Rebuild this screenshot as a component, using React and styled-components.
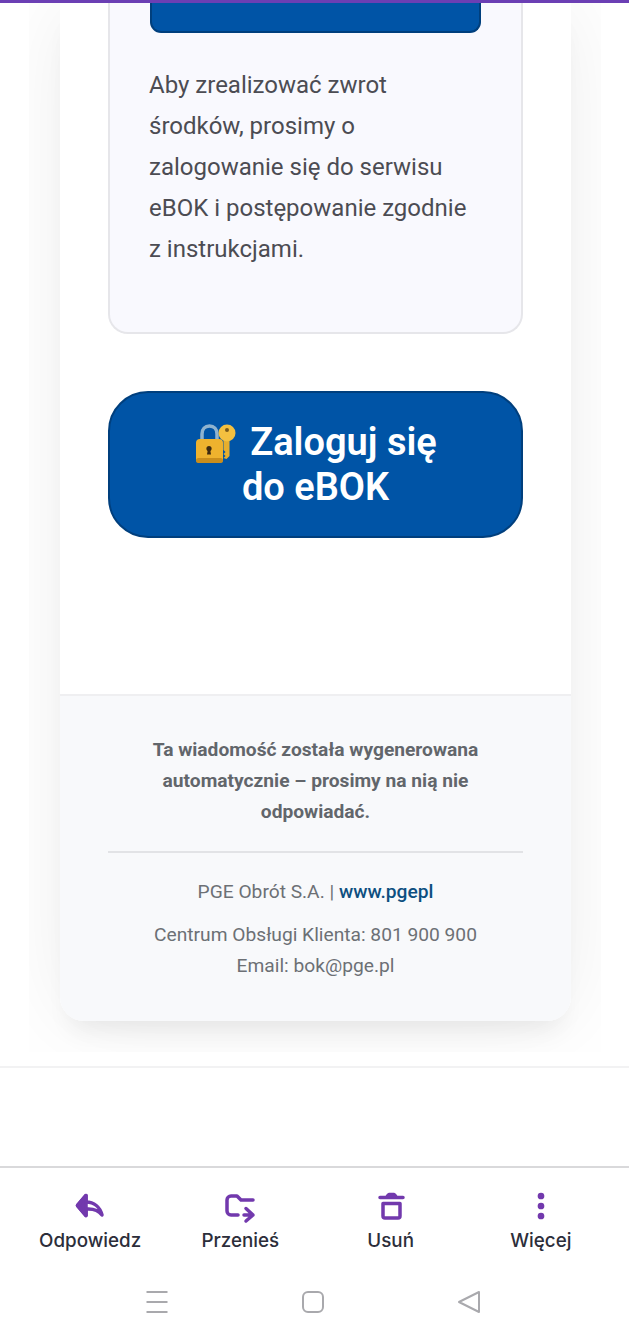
import React from "react";
import styled, { createGlobalStyle } from "styled-components";

const GlobalStyle = createGlobalStyle`
  html, body {
    margin: 0;
    padding: 0;
    height: 1341px;
    overflow: hidden;
    background: #fff;
  }
  * {
    box-sizing: border-box;
  }
`;

const Page = styled.div`
  width: 629px;
  height: 1341px;
  display: flex;
  flex-direction: column;
  background: #fff;
  font-family: Roboto, "Liberation Sans", sans-serif;
`;

const ProgressBar = styled.div`
  height: 3px;
  background: #6b3fb4;
  flex: none;
`;

const MailBody = styled.div`
  height: 1049px;
  flex: none;
  margin: 0 28px 0 29px;
  padding: 0 30px 31px 31px;
  overflow: hidden;
`;

const Card = styled.div`
  background: #fff;
  border-radius: 0 0 24px 24px;
  box-shadow: 0 0 90px rgba(0, 0, 0, 0.07), 0 18px 24px -10px rgba(0, 0, 0, 0.07);
`;

const Main = styled.div`
  padding: 0 48px 156px;
`;

const Panel = styled.div`
  background: #f9f9fe;
  border: 2px solid #e6e6ea;
  border-top: none;
  border-radius: 0 0 20px 20px;
  padding: 0 40px 62px;
`;

const PanelButton = styled.div`
  height: 30px;
  background: #0054a6;
  border: 2px solid #003f7d;
  border-top: none;
  border-radius: 0 0 11px 11px;
`;

const PanelText = styled.p`
  margin: 32px 0 0 -1px;
  font-size: 24px;
  line-height: 41px;
  color: #4c4c53;
  white-space: nowrap;
`;

const LoginButton = styled.a`
  display: block;
  margin-top: 57px;
  padding: 26.5px 20px;
  background: #0054a6;
  border: 2px solid #003f7d;
  border-radius: 40px;
  color: #fff;
  font-size: 38px;
  font-weight: 600;
  line-height: 45px;
  text-align: center;
`;

const LockIcon = styled.svg`
  width: 44px;
  height: 42px;
  margin-right: 12px;
  vertical-align: -9px;
`;

const Footer = styled.div`
  background: #f8f9fb;
  border-top: 2px solid #efeff1;
  border-radius: 0 0 24px 24px;
  padding: 38px 48px 40px;
  text-align: center;
  color: #6c7075;
`;

const Notice = styled.p`
  margin: 0;
  font-size: 19.2px;
  font-weight: 700;
  line-height: 31px;
  color: #62666b;
  white-space: nowrap;
`;

const Divider = styled.hr`
  margin: 24px 0 23px;
  border: none;
  border-top: 2px solid #e2e3e6;
`;

const FooterLine = styled.p`
  margin: ${(p) => (p.$spaced ? "12px 0 0" : "0")};
  font-size: 19.2px;
  line-height: 31px;
  white-space: nowrap;
`;

const SiteLink = styled.a`
  color: #0d4f80;
  font-weight: 500;
`;

const Spacer = styled.div`
  height: 100px;
  flex: none;
  margin-top: 14px;
  border-top: 2px solid #f2f2f3;
`;

const ActionBar = styled.div`
  flex: none;
  height: 107px;
  border-top: 2px solid #d9d9db;
  padding: 0 13px 0 15px;
  display: grid;
  grid-template-columns: repeat(4, 1fr);
`;

const Action = styled.button`
  background: none;
  border: none;
  padding: 21px 0 0;
  display: flex;
  flex-direction: column;
  align-items: center;
  font-family: Inter, "Noto Sans", sans-serif;
  font-size: 18.8px;
  font-weight: 500;
  color: #2c2e3a;
`;

const ActionIcon = styled.svg`
  width: 32px;
  height: 32px;
  margin-bottom: 8px;
  overflow: visible;
  color: #7239ad;
  fill: none;
  stroke: currentColor;
  stroke-width: 3.5;
  stroke-linecap: round;
  stroke-linejoin: round;
`;

const SystemBar = styled.div`
  flex: 1;
  display: grid;
  grid-template-columns: repeat(3, 156px);
  justify-content: center;
  justify-items: center;
  padding: 17px 4px 0 0;
`;

const SystemIcon = styled.svg`
  width: 24px;
  height: 24px;
  fill: none;
  stroke: #a9a9ad;
  stroke-width: 2;
  stroke-linejoin: round;
`;

function Lock() {
  return (
    <LockIcon viewBox="0 0 44 42">
      <path d="M8 20V12C8 7 11 4 15.500 4S23 7 23 12v8" fill="none" stroke="#8fb3cf" strokeWidth="3.500" />
      <rect x="2" y="17" width="27" height="24" rx="4" fill="#eeb22e" />
      <rect x="2" y="36" width="27" height="5" rx="2.500" fill="#c98d1c" />
      <circle cx="15" cy="26.500" r="2.600" fill="#3d2a12" />
      <path d="M14 26.500h2l1 6h-4z" fill="#3d2a12" />
      <path d="M29.500 17h6v17l-3 3-3-1 2-2-2-2 2-2-2-2z" fill="#e7ae2d" />
      <circle cx="33" cy="11" r="8.500" fill="#f3c040" />
      <circle cx="33" cy="8" r="2" fill="#7a5a1a" />
    </LockIcon>
  );
}

export default function App() {
  return (
    <Page>
      <GlobalStyle />
      <ProgressBar />
      <MailBody>
        <Card>
          <Main>
            <Panel>
              <PanelButton />
              <PanelText>
                Aby zrealizować zwrot
                <br />
                środków, prosimy o
                <br />
                zalogowanie się do serwisu
                <br />
                eBOK i postępowanie zgodnie
                <br />z instrukcjami.
              </PanelText>
            </Panel>
            <LoginButton>
              <Lock />
              Zaloguj się
              <br />
              do eBOK
            </LoginButton>
          </Main>
          <Footer>
            <Notice>
              Ta wiadomość została wygenerowana
              <br />
              automatycznie – prosimy na nią nie
              <br />
              odpowiadać.
            </Notice>
            <Divider />
            <FooterLine>
              PGE Obrót S.A. | <SiteLink>www.pgepl</SiteLink>
            </FooterLine>
            <FooterLine $spaced>
              Centrum Obsługi Klienta: 801 900 900
              <br />
              Email: bok@pge.pl
            </FooterLine>
          </Footer>
        </Card>
      </MailBody>
      <Spacer />
      <ActionBar>
        <Action>
          <ActionIcon viewBox="0 0 32 32">
            <path d="M12 6.500 3.500 16.500 12 26.500v-6.500c6-.5 12 .5 16 6-2-8-8-13-16-13z" />
            <path d="M12 6.500 3.500 16.500 12 26.500z" fill="currentColor" />
          </ActionIcon>
          Odpowiedz
        </Action>
        <Action>
          <ActionIcon viewBox="0 0 32 32">
            <path d="M29 11H17l-4-4H7a4 4 0 0 0-4 4v11a4 4 0 0 0 4 4h7" />
            <path d="M20 26h9M22 19.500 29 26l-7 6" />
          </ActionIcon>
          Przenieś
        </Action>
        <Action>
          <ActionIcon viewBox="0 0 32 32">
            <path d="M5 8.500h23M8 14.500h17V27a2 2 0 0 1-2 2H10a2 2 0 0 1-2-2z" />
            <path d="M12.500 7 14 5.500h5L20.500 7z" fill="currentColor" />
          </ActionIcon>
          Usuń
        </Action>
        <Action>
          <ActionIcon viewBox="0 0 32 32">
            <circle cx="16" cy="7" r="1.600" fill="currentColor" />
            <circle cx="16" cy="17" r="1.600" fill="currentColor" />
            <circle cx="16" cy="27" r="1.600" fill="currentColor" />
          </ActionIcon>
          Więcej
        </Action>
      </ActionBar>
      <SystemBar>
        <SystemIcon viewBox="0 0 24 24">
          <path d="M1.500 2h21M1.500 12h21M1.500 22h21" />
        </SystemIcon>
        <SystemIcon viewBox="0 0 24 24">
          <rect x="2" y="2" width="20" height="20" rx="5" />
        </SystemIcon>
        <SystemIcon viewBox="0 0 24 24">
          <path d="M22 2v20L2 12z" />
        </SystemIcon>
      </SystemBar>
    </Page>
  );
}
